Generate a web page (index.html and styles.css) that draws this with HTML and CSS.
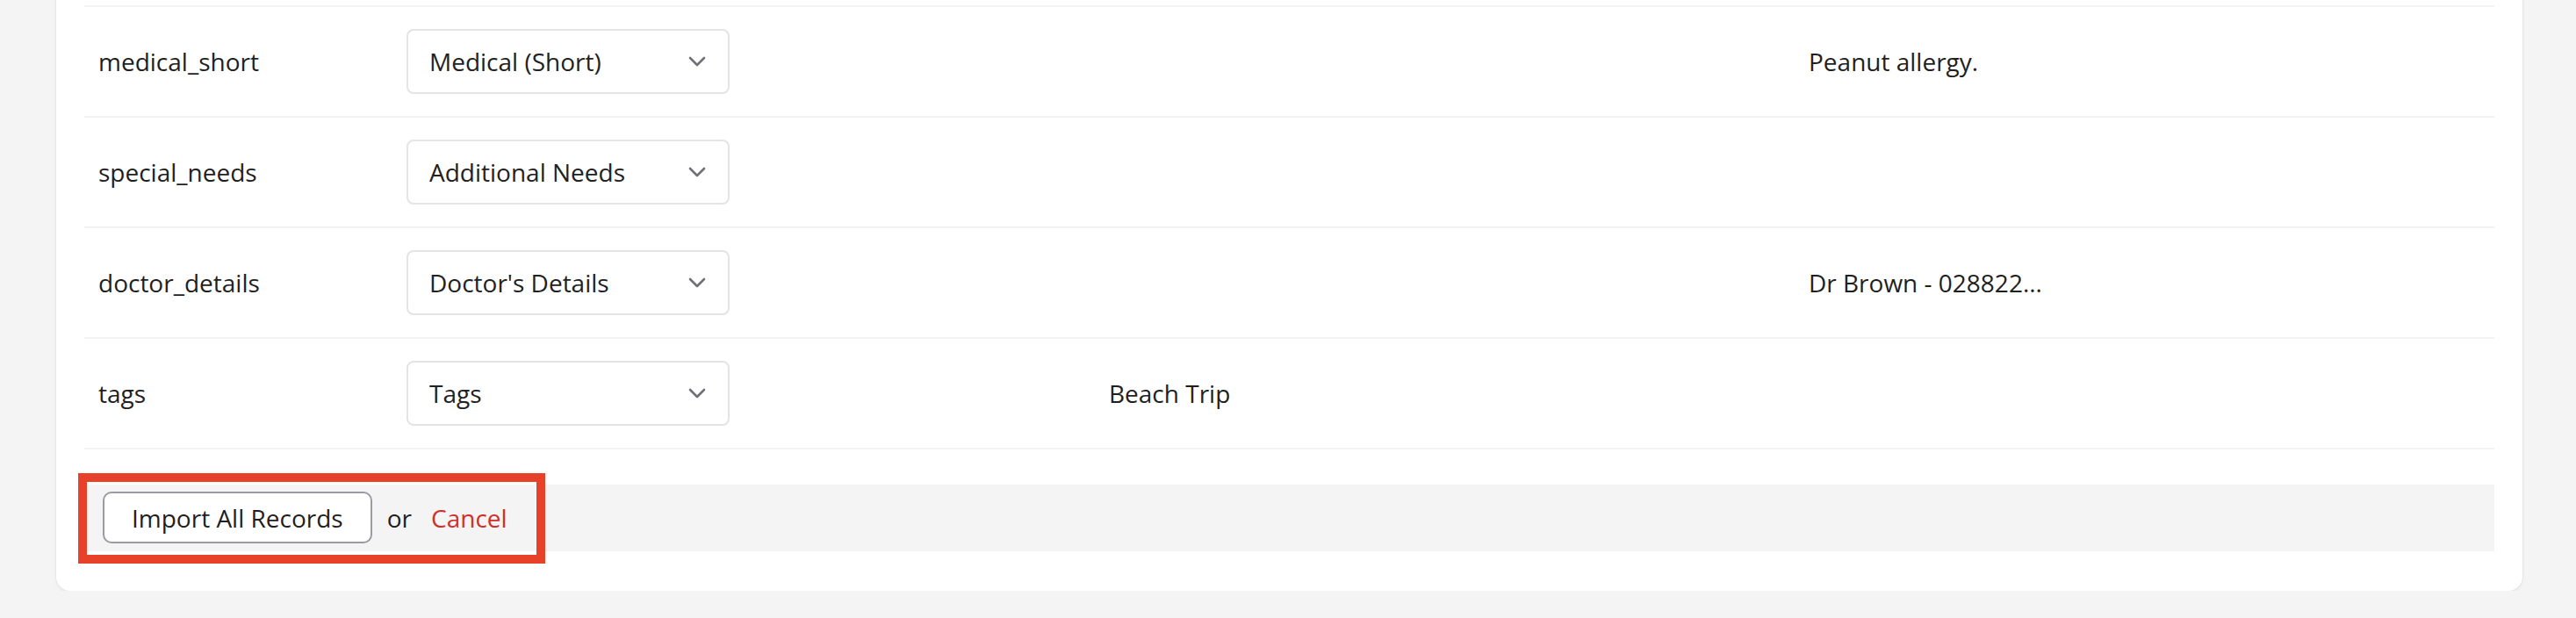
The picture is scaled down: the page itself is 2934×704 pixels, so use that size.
FILE: index.html
```html
<!DOCTYPE html>
<html lang="en">
<head>
<meta charset="utf-8">
<title>Import mapping</title>
<link rel="stylesheet" href="styles.css">
</head>
<body>
<div class="card">
  <div class="table">
    <div class="row">
      <div class="cell label">medical_short</div>
      <div class="cell"><div class="select"><span>Medical (Short)</span><svg class="chev" viewBox="0 0 20 12" width="20" height="12"><path d="M2 2 L10 10 L18 2" /></svg></div></div>
      <div class="cell"></div>
      <div class="cell">Peanut allergy.</div>
    </div>
    <div class="row">
      <div class="cell label">special_needs</div>
      <div class="cell"><div class="select"><span>Additional Needs</span><svg class="chev" viewBox="0 0 20 12" width="20" height="12"><path d="M2 2 L10 10 L18 2" /></svg></div></div>
      <div class="cell"></div>
      <div class="cell"></div>
    </div>
    <div class="row">
      <div class="cell label">doctor_details</div>
      <div class="cell"><div class="select"><span>Doctor's Details</span><svg class="chev" viewBox="0 0 20 12" width="20" height="12"><path d="M2 2 L10 10 L18 2" /></svg></div></div>
      <div class="cell"></div>
      <div class="cell">Dr Brown - 028822...</div>
    </div>
    <div class="row">
      <div class="cell label">tags</div>
      <div class="cell"><div class="select"><span>Tags</span><svg class="chev" viewBox="0 0 20 12" width="20" height="12"><path d="M2 2 L10 10 L18 2" /></svg></div></div>
      <div class="cell">Beach Trip</div>
      <div class="cell"></div>
    </div>
  </div>
  <div class="footer">
    <button class="btn" type="button">Import All Records</button>
    <span class="or">or</span>
    <a class="cancel" href="#">Cancel</a>
    <div class="highlight"></div>
  </div>
</div>
</body>
</html>
```

FILE: styles.css
```css
html, body {
  margin: 0;
  padding: 0;
}
body {
  background: #f4f4f4;
  font-family: "Open Sans", "Liberation Sans", sans-serif;
  font-size: 28px;
  color: #1f1f1f;
  overflow: hidden;
}
.card {
  box-sizing: border-box;
  margin: -20px 0 0 64px;
  width: 2809px;
  background: #ffffff;
  border-radius: 16px;
  box-shadow: 0 0 0 1px #e7e7ea, 0 2px 4px rgba(0, 0, 0, 0.06);
  padding: 26px 32px 45px 32px;
}
.table {
  border-top: 2px solid #f1f2f4;
}
.row {
  box-sizing: border-box;
  display: grid;
  grid-template-columns: 351px 800px 797px 1fr;
  align-items: center;
  height: 126px;
  padding-left: 16px;
  border-bottom: 2px solid #f1f2f4;
}
.cell {
  white-space: nowrap;
}
.select {
  box-sizing: border-box;
  width: 368px;
  height: 74px;
  border: 2px solid #e4e4e7;
  border-radius: 8px;
  display: flex;
  align-items: center;
  justify-content: space-between;
  padding: 0 25px 0 24px;
  color: #222222;
}
.chev path {
  fill: none;
  stroke: #707076;
  stroke-width: 2.6;
  stroke-linecap: round;
  stroke-linejoin: round;
}
.footer {
  position: relative;
  margin-top: 40px;
  height: 76px;
  background: #f4f4f4;
  display: flex;
  align-items: center;
  padding-left: 21px;
}
.btn {
  box-sizing: border-box;
  height: 59px;
  padding: 0 31px;
  margin-top: -1px;
  border: 2px solid #9b9ba1;
  border-radius: 10px;
  background: #ffffff;
  font-family: "Open Sans", "Liberation Sans", sans-serif;
  font-size: 28px;
  color: #1f1f1f;
}
.or {
  margin-left: 17px;
  color: #1f1f1f;
}
.cancel {
  margin-left: 22px;
  color: #cf302c;
  text-decoration: none;
}
.highlight {
  position: absolute;
  left: -7px;
  top: -13px;
  width: 532px;
  height: 103px;
  box-sizing: border-box;
  border: 10px solid #e8412a;
  pointer-events: none;
}
```
